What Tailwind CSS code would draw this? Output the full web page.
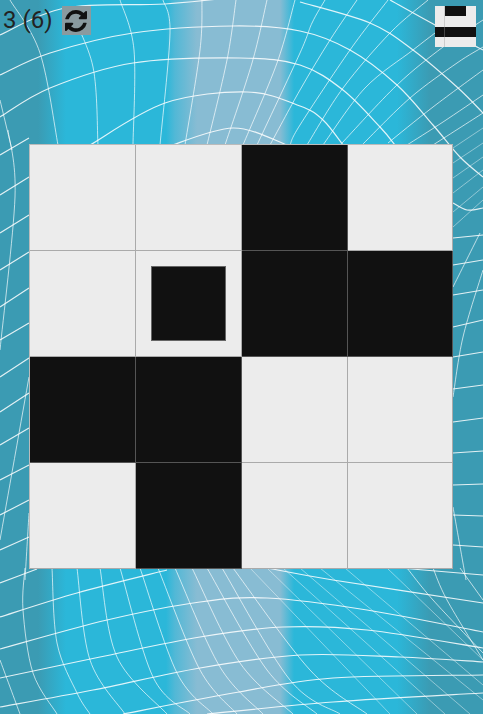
<!DOCTYPE html>
<html lang="en">
<head>
  <meta charset="UTF-8" />
  <meta name="viewport" content="width=device-width, initial-scale=1.0"/>
  <title>Flip</title>
  <script src="https://cdn.jsdelivr.net/npm/@tailwindcss/browser@4"></script>
</head>
<body class="overflow-hidden">
  <div class="relative w-[483px] h-[714px] overflow-hidden font-['Roboto',sans-serif] bg-[linear-gradient(90deg,#3b9bb3_0px,#3b9bb3_38px,#2bb7d9_66px,#2bb7d9_166px,#52b8d6_175px,#88bcd3_197px,#88bcd3_280px,#2bb7d9_294px,#2bb7d9_397px,#3b9bb3_430px,#3b9bb3_483px)]">

    <!-- warped grid behind everything -->
    <svg id="warp" class="absolute inset-0" width="483" height="714" fill="none" stroke="#fff"></svg>

    <div class="relative">
      <!-- top bar -->
      <div class="flex justify-between h-[144px]">
        <div class="flex items-start pl-[3px] pt-[6px]">
          <span class="text-[24px] leading-[29px] font-normal text-[#222]">3 (6)</span>
          <button class="ml-[9px] w-[29px] h-[29px] flex items-center justify-center bg-[#8a9a9f]">
            <svg width="22" height="22" viewBox="0 0 1536 1536" fill="#111"><path d="M1511 928q0 5-1 7-64 268-268 434.5t-478 166.5q-146 0-282.5-55t-243.5-157l-129 129q-19 19-45 19t-45-19-19-45v-448q0-26 19-45t45-19h448q26 0 45 19t19 45-19 45l-137 137q71 66 161 102t187 36q134 0 250-65t186-179q11-17 53-117 8-23 30-23h192q13 0 22.5 9.5t9.5 22.5zm25-800v448q0 26-19 45t-45 19h-448q-26 0-45-19t-19-45 19-45l138-138q-148-137-349-137-134 0-250 65t-186 179q-11 17-53 117-8 23-30 23h-199q-13 0-22.5-9.5t-9.5-22.5v-7q65-268 270-434.5t480-166.5q146 0 284 55.5t245 156.5l130-129q19-19 45-19t45 19 19 45z"/></svg>
          </button>
        </div>
        <!-- target pattern -->
        <div class="mt-[6px] mr-[7px] w-[41px] h-[41px] grid grid-cols-4 grid-rows-4">
          <div class="bg-[#ececec] border-r border-[#ccc]"></div>
          <div class="bg-[#111]"></div>
          <div class="bg-[#111]"></div>
          <div class="bg-[#ececec]"></div>
          <div class="bg-[#ececec] border-r border-[#ccc]"></div>
          <div class="bg-[#ececec]"></div>
          <div class="bg-[#ececec]"></div>
          <div class="bg-[#ececec]"></div>
          <div class="bg-[#111] border-r border-[#444]"></div>
          <div class="bg-[#111]"></div>
          <div class="bg-[#111]"></div>
          <div class="bg-[#111]"></div>
          <div class="bg-[#ececec] border-r border-[#ccc]"></div>
          <div class="bg-[#ececec]"></div>
          <div class="bg-[#ececec]"></div>
          <div class="bg-[#ececec]"></div>
        </div>
      </div>

      <!-- board -->
      <div class="ml-[29px] w-fit border-t border-l border-[#bbb] grid grid-cols-[106px_106px_106px_105px] grid-rows-[106px_106px_106px_106px] [&>div]:border-r [&>div]:border-b">
        <div class="bg-[#ececec] border-[#aaa]"></div>
        <div class="bg-[#ececec] border-[#aaa]"></div>
        <div class="bg-[#111] border-[#555]"></div>
        <div class="bg-[#ececec] border-[#aaa]"></div>

        <div class="bg-[#ececec] border-[#aaa]"></div>
        <div class="bg-[#ececec] border-[#aaa] flex items-center justify-center">
          <div class="w-[75px] h-[75px] bg-[#111] border border-[#666]"></div>
        </div>
        <div class="bg-[#111] border-[#555]"></div>
        <div class="bg-[#111] border-[#555]"></div>

        <div class="bg-[#111] border-[#555]"></div>
        <div class="bg-[#111] border-[#555]"></div>
        <div class="bg-[#ececec] border-[#aaa]"></div>
        <div class="bg-[#ececec] border-[#aaa]"></div>

        <div class="bg-[#ececec] border-[#aaa]"></div>
        <div class="bg-[#111] border-[#555]"></div>
        <div class="bg-[#ececec] border-[#aaa]"></div>
        <div class="bg-[#ececec] border-[#aaa]"></div>
      </div>
    </div>
  </div>

  <script>
    // points read off the picture, [x,y,x,y,...]; the board hides what lies between top and bottom
    const arcs = [
      // top
      [0,35,65,8,165,4,236,-3],
      [300,2,370,23,413,50,457,87,483,113],
      [0,75,50,53,133,33,233,26,300,31,350,50,397,85,433,125,460,157,483,177],
      [0,117,50,88,133,63,240,58,300,65,343,90,380,127,395,145],
      [90,145,165,103,247,92,300,106,323,120,343,145],
      [167,147,233,128,287,145],
      [390,0,435,25,483,50],
      // bottom
      [0,649,107,620,200,602,267,598,367,610,483,632],
      [0,678,100,657,200,637,283,627,367,630,483,648],
      [0,707,93,690,200,668,300,655,400,657,483,662],
      [123,714,233,693,333,678,483,675],
      [207,714,333,702,483,693],
      [267,568,333,580,483,603],
      [0,617,77,593,167,570],
      [0,583,37,569],
      [400,568,483,575],
      // sides
      [453,203,467,210,483,208],
      [0,155,29,138],[0,195,29,177],[0,233,29,215],[0,270,29,252],[0,307,29,288],[0,340,29,323],
      [0,377,29,358],[0,412,29,393],[0,445,29,428],[0,480,29,465],[0,515,29,500],[0,550,29,537],
      [453,238,483,235],[453,265,483,260],[453,295,483,290],[453,327,483,320],
      [453,357,483,352],[453,389,483,385],[453,422,483,418],[453,453,483,451],[453,485,483,484],
      [453,515,483,516],[453,545,483,547]
    ];
    const spokes = [
      // top
      [10,0,40,53,58,145],
      [70,10,93,67,98,145],
      [120,0,134,50,133,145],
      [163,0,170,33,160,145],
      [202,0,200,50,185,145],
      [236,0,227,60,207,145],
      [267,0,252,63,225,145],
      [295,0,277,63,243,145],
      [325,0,312,23,300,53,257,145],
      [357,0,330,40,300,90,270,145],
      [388,0,350,50,300,125,290,145],
      [428,0,390,33,343,88,307,145],
      [435,33,413,50,365,88,323,145],
      [483,20,443,47,397,85,342,143],
      [483,47,457,63,410,98,362,145],
      [483,70,433,107,388,143],
      [483,95,443,122,407,145],
      [483,113,433,145],
      [0,100,12,150],
      // sides
      [8,130,15,197,0,350],[29,377,0,540],[29,513,25,580],
      [483,270,463,337,453,397],[453,507,466,580],[453,287,480,233],
      // bottom
      [25,568,23,610,33,673,57,714],
      [52,568,57,643,77,693,90,714],
      [77,568,90,660,125,714],
      [100,568,117,657,167,714],
      [120,568,153,677,190,714],
      [140,568,177,673,213,714],
      [158,568,200,670,237,714],
      [175,568,220,667,263,714],
      [192,568,240,663,293,714],
      [207,568,267,670,317,714],
      [222,568,290,680,340,714],
      [233,568,310,670,367,714],
      [407,568,433,600,483,653],
      [433,568,447,600,483,660],
      [460,568,483,600],
      [0,660,20,714]
    ];
    const faint = [
      [453,148,483,128],[453,163,483,143],[453,178,483,157],[453,193,483,170],[453,212,483,187],[453,227,483,200],
      [250,568,390,714],
      [267,568,417,714],
      [283,568,445,714],
      [300,568,470,714],
      [320,568,483,700],
      [345,568,483,685],
      [387,568,483,660]
    ];

    // catmull-rom through the points
    function smooth(p) {
      const pt = i => {
        const j = Math.max(0, Math.min(p.length / 2 - 1, i));
        return [p[j * 2], p[j * 2 + 1]];
      };
      let d = `M${p[0]} ${p[1]}`;
      for (let i = 0; i < p.length / 2 - 1; i++) {
        const [a, b, c, e] = [pt(i - 1), pt(i), pt(i + 1), pt(i + 2)];
        d += `C${b[0] + (c[0] - a[0]) / 6} ${b[1] + (c[1] - a[1]) / 6} ${c[0] - (e[0] - b[0]) / 6} ${c[1] - (e[1] - b[1]) / 6} ${c[0]} ${c[1]}`;
      }
      return d;
    }

    const group = (list, opacity, width) =>
      `<g stroke-opacity="${opacity}" stroke-width="${width}">` + list.map(l => `<path d="${smooth(l)}"/>`).join("") + "</g>";

    document.getElementById("warp").innerHTML = group(faint, 0.55, 0.8) + group(spokes, 0.75, 0.9) + group(arcs, 0.85, 1.2);
  </script>
</body>
</html>
